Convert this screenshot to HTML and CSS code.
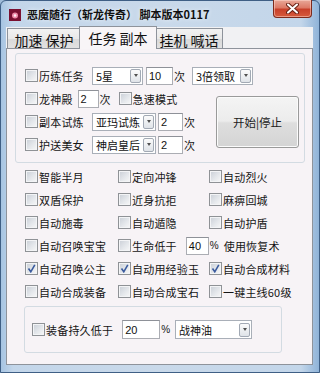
FILE: index.html
```html
<!DOCTYPE html>
<html lang="zh-CN">
<head>
  <meta charset="UTF-8" />
  <meta name="viewport" content="width=device-width, initial-scale=1.0"/>
  <title>恶魔随行</title>
  <link rel="stylesheet" href="styles.css">
</head>
<body>

  <div class="window">
    <div class="titlebar">
      <svg class="app-icon" width="12" height="12" viewBox="0 0 12 12">
        <rect x="0" y="0" width="12" height="12" fill="#7a1030"/>
        <circle cx="6" cy="6.5" r="3" fill="#f08aa8"/>
        <circle cx="6" cy="6.5" r="1.3" fill="#fff0f4"/>
      </svg>
      <span class="title">恶魔随行（斩龙传奇） 脚本版本0117</span>
      <div class="close-btn">
        <svg width="13" height="11" viewBox="0 0 13 11">
          <path d="M2 1.5 L11 9.5 M11 1.5 L2 9.5" stroke="#6a2216" stroke-width="4" stroke-linecap="round"/>
          <path d="M2 1.5 L11 9.5 M11 1.5 L2 9.5" stroke="#ffffff" stroke-width="2" stroke-linecap="round"/>
        </svg>
      </div>
    </div>

    <div class="client">
      <div class="tabs">
        <div class="tab">加速 保护</div>
        <div class="tab active">任务 副本</div>
        <div class="tab last">挂机 喊话</div>
      </div>

      <div class="panel">

        <!-- task group -->
        <div class="group task-group">
          <div class="row span-all">
            <div class="chk wide"><span class="box"></span>历练任务</div>
            <div class="select w51"><span>5星</span><i></i></div>
            <div class="input w27">10</div>
            <span class="unit">次</span>
            <div class="select w61 ml7"><span>3倍领取</span><i></i></div>
          </div>
          <div class="row">
            <div class="chk"><span class="box"></span>龙神殿</div>
            <div class="input w21 ml5">2</div>
            <span class="unit">次</span>
            <div class="chk ml8"><span class="box"></span>急速模式</div>
          </div>
          <div class="row">
            <div class="chk wide"><span class="box"></span>副本试炼</div>
            <div class="select w64"><span>亚玛试炼</span><i></i></div>
            <div class="input w25">2</div>
            <span class="unit">次</span>
          </div>
          <div class="row">
            <div class="chk wide"><span class="box"></span>护送美女</div>
            <div class="select w64"><span>神启皇后</span><i></i></div>
            <div class="input w25">2</div>
            <span class="unit">次</span>
          </div>
          <button class="start-btn">开始|停止</button>
        </div>

        <!-- option checkboxes -->
        <div class="options">
          <div class="chk"><span class="box"></span>智能半月</div>
          <div class="chk"><span class="box"></span>定向冲锋</div>
          <div class="chk"><span class="box"></span>自动烈火</div>

          <div class="chk"><span class="box"></span>双盾保护</div>
          <div class="chk"><span class="box"></span>近身抗拒</div>
          <div class="chk"><span class="box"></span>麻痹回城</div>

          <div class="chk"><span class="box"></span>自动施毒</div>
          <div class="chk"><span class="box"></span>自动遁隐</div>
          <div class="chk"><span class="box"></span>自动护盾</div>

          <div class="chk"><span class="box"></span>自动召唤宝宝</div>
          <div class="opt-span">
            <div class="chk"><span class="box"></span>生命低于</div>
            <div class="input w23 ml9">40</div>
            <span class="pct">%</span>
            <span class="txt">使用恢复术</span>
          </div>

          <div class="chk"><span class="box on"></span>自动召唤公主</div>
          <div class="chk"><span class="box on"></span>自动用经验玉</div>
          <div class="chk"><span class="box on"></span>自动合成材料</div>

          <div class="chk"><span class="box"></span>自动合成装备</div>
          <div class="chk"><span class="box"></span>自动合成宝石</div>
          <div class="chk"><span class="box"></span>一键主线60级</div>
        </div>

        <!-- repair group -->
        <div class="group repair-group">
          <div class="row">
            <div class="chk"><span class="box"></span>装备持久低于</div>
            <div class="input tall w38 ml9">20</div>
            <span class="pct">%</span>
            <div class="select tall w77 ml5"><span>战神油</span><i></i></div>
          </div>
        </div>

      </div>
    </div>
  </div>

</body>
</html>
```

FILE: styles.css
```css
* {
  margin: 0;
  padding: 0;
  box-sizing: border-box;
  font-family: "Noto Sans CJK SC", "Liberation Sans", sans-serif;
}

body {
  width: 320px;
  height: 373px;
  overflow: hidden;
  background-color: #9fbcd9;
}

.window {
  width: 320px;
  height: 373px;
  display: flex;
  flex-direction: column;
  border: 1px solid #3f5f85;
  border-radius: 6px 6px 0 0;
  background: linear-gradient(to right, #a6c4e2 0, #c3d6ea 12px, #c9d9ea 50%, #c3d6ea 300px, #8fb3d8 100%);
}

/* title bar */

.titlebar {
  height: 26px;
  display: flex;
  align-items: center;
  padding-left: 8px;
  flex-shrink: 0;
}

.app-icon {
  flex-shrink: 0;
  margin-top: 1px;
}

.title {
  margin-left: 6px;
  font-size: 11px;
  font-weight: bold;
  color: #111111;
  white-space: nowrap;
  text-shadow: 0 0 4px #eef4fa;
}

.close-btn {
  width: 39px;
  height: 18px;
  margin-left: auto;
  margin-right: 7px;
  align-self: flex-start;
  margin-top: -1px;
  display: flex;
  justify-content: center;
  align-items: center;
  border: 1px solid #7d2a1c;
  border-top: none;
  border-radius: 0 0 4px 4px;
  background: linear-gradient(to bottom, #e8a899 0, #dd7a67 45%, #c8402a 55%, #d65a3c 100%);
  box-shadow: inset 0 0 0 1px rgba(255, 220, 210, 0.5);
}

/* client area */

.client {
  flex: 1;
  display: flex;
  flex-direction: column;
  margin: 0 6px 7px 5px;
  background-color: #eef0f3;
}

.tabs {
  height: 21px;
  display: flex;
  align-items: flex-end;
  padding-left: 1px;
  flex-shrink: 0;
  background-color: #f1f1f3;
}

.tab {
  width: 74px;
  height: 20px;
  display: flex;
  justify-content: center;
  align-items: center;
  padding-top: 2px;
  font-size: 14px;
  color: #111111;
  border: 1px solid #8e939b;
  border-bottom: none;
  background: linear-gradient(to bottom, #f2f2f2 0, #e9e9e9 50%, #d9d9d9 51%, #e2e2e2 100%);
}

.tab.active {
  position: relative;
  z-index: 1;
  width: 78px;
  height: 23px;
  margin: 0 -2px -1px;
  padding-top: 0;
  background: #f8f5f7;
}

.tab.last {
  width: 68px;
}

.panel {
  flex: 1;
  display: flex;
  flex-direction: column;
  border: 1px solid #8e939b;
  background-color: #f7f3f6;
}

/* shared controls */

.group {
  border: 1px solid #d3dbe2;
  border-radius: 3px;
}

.row {
  height: 23px;
  display: flex;
  align-items: center;
}

.chk {
  display: flex;
  align-items: center;
  gap: 1px;
  font-size: 11px;
  letter-spacing: 0.2px;
  color: #151515;
  white-space: nowrap;
}

.chk.wide {
  width: 67px;
}

.box {
  width: 13px;
  height: 13px;
  flex-shrink: 0;
  border: 1px solid #8f9296;
  background: linear-gradient(135deg, #c9ced6 0, #e4e7eb 55%, #f8f8f8 100%);
  box-shadow: inset 0 0 0 1px #f3f4f6;
}

.box.on {
  background:
    url("data:image/svg+xml;utf8,<svg xmlns='http://www.w3.org/2000/svg' width='11' height='11'><path d='M2.5 5.5 L4.8 8.8 L8.8 1.8' fill='none' stroke='%233b5b9e' stroke-width='1.6'/></svg>") center no-repeat,
    linear-gradient(135deg, #c9ced6 0, #e4e7eb 55%, #f8f8f8 100%);
}

.select {
  height: 18px;
  display: flex;
  align-items: center;
  justify-content: space-between;
  padding: 0 1px 0 3px;
  border: 1px solid #a9afb8;
  background-color: #ffffff;
  font-size: 11px;
  color: #111111;
}

.select i {
  width: 11px;
  height: 14px;
  display: flex;
  justify-content: center;
  align-items: center;
  border: 1px solid #a2a9b4;
  border-radius: 2px;
  background: linear-gradient(to bottom, #fbfbfb, #dfe3e8);
}

.select i::after {
  content: "";
  border-left: 2.5px solid transparent;
  border-right: 2.5px solid transparent;
  border-top: 3px solid #505050;
}

.input {
  height: 18px;
  display: flex;
  align-items: center;
  padding-left: 2px;
  border: 1px solid #abadb3;
  border-top-color: #8e9198;
  background-color: #ffffff;
  font-family: "Liberation Sans", sans-serif;
  font-size: 11px;
  color: #111111;
}

.tall {
  height: 19px;
}

.unit {
  margin-left: 1px;
  font-size: 11px;
  color: #151515;
}

.pct {
  margin-left: 1px;
  font-family: "Liberation Sans", sans-serif;
  font-size: 10px;
  color: #151515;
}

.txt {
  margin-left: 5px;
  font-size: 11px;
  letter-spacing: 0.2px;
  color: #151515;
}

.w21 { width: 21px; }
.w23 { width: 23px; }
.w25 { width: 25px; margin-left: 2px; }
.w27 { width: 27px; margin-left: 3px; }
.w38 { width: 38px; }
.w51 { width: 51px; }
.w61 { width: 61px; }
.w64 { width: 64px; }
.w77 { width: 77px; }
.ml5 { margin-left: 5px; }
.ml7 { margin-left: 7px; }
.ml8 { margin-left: 8px; }
.ml9 { margin-left: 9px; }

/* task group */

.task-group {
  margin: 4px 7px 0 8px;
  height: 110px;
  padding: 10px 5px 6px 9px;
  display: grid;
  grid-template-columns: 1fr 83px;
  grid-template-rows: repeat(4, 23px);
}

.task-group .row {
  grid-column: 1;
}

.task-group .span-all {
  grid-column: 1 / -1;
}

.start-btn {
  grid-column: 2;
  grid-row: 2 / 5;
  align-self: start;
  margin-top: 9px;
  height: 52px;
  border: 1px solid #9a9a9a;
  border-radius: 3px;
  background: linear-gradient(to bottom, #f4f4f4 0, #ececec 48%, #dedede 52%, #d4d4d4 100%);
  box-shadow: inset 0 0 0 1px #fbfbfb;
  font-size: 11.5px;
  color: #1a1a1a;
}

/* options grid */

.options {
  margin-top: 2px;
  padding-left: 18px;
  display: grid;
  grid-template-columns: 93px 91px 1fr;
  grid-auto-rows: 23px;
  align-items: center;
}

.opt-span {
  grid-column: 2 / 4;
  display: flex;
  align-items: center;
}

/* repair group */

.repair-group {
  width: 258px;
  margin: 3px 0 0 17px;
  padding: 11px 7px;
}
```
